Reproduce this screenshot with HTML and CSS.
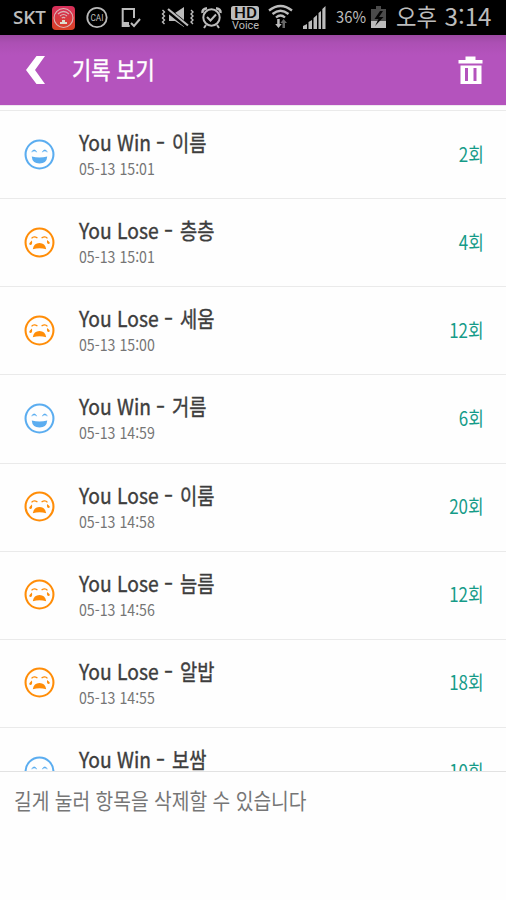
FILE: index.html
```
<!DOCTYPE html>
<html lang="ko">
<head>
<meta charset="utf-8">
<title>기록 보기</title>
<link rel="stylesheet" href="styles.css">
</head>
<body>
<svg class="defs" aria-hidden="true">
  <symbol id="win" viewBox="0 0 30 30">
    <circle cx="15" cy="15" r="13.500" fill="none" stroke="currentColor" stroke-width="2"/>
    <path d="M7.300 12.700Q9.800 8.300 12.500 12.700Q9.800 10.600 7.300 12.700ZM17.500 12.700Q20.200 8.300 22.700 12.700Q20.200 10.600 17.500 12.700Z" fill="currentColor" stroke="currentColor" stroke-width=".4"/>
    <path d="M7.500 17Q15 18.800 22.500 17Q22 23.800 15 23.800T7.500 17Z" fill="currentColor"/>
  </symbol>
  <symbol id="lose" viewBox="0 0 30 30">
    <circle cx="15" cy="15" r="13.500" fill="none" stroke="currentColor" stroke-width="2"/>
    <path d="M7.300 11Q9.500 8.200 13 10.700M17 10.700Q20.500 8.200 22.700 11" fill="none" stroke="currentColor" stroke-width="1.300"/>
    <path d="M8.500 21.500Q9.500 15.500 15 15.500T21.500 21.500Q15 19.600 8.500 21.500Z" fill="currentColor"/>
    <path d="M7.700 13Q8.500 17.200 6.200 17.400Q3.300 16.500 7.700 13ZM22.300 12.500Q21.800 16.200 23.800 16.500Q26.800 15.500 22.300 12.500Z" fill="currentColor"/>
  </symbol>
</svg>
<div class="status">
  <svg class="status-icons" viewBox="0 0 506 35">
    <defs><linearGradient id="hot" x2="0" y2="1"><stop stop-color="#d62f5c"/><stop offset="1" stop-color="#d94224"/></linearGradient></defs>
    <rect x="52" y="6" width="23" height="24" rx="4" fill="url(#hot)"/>
    <g fill="none" stroke="#d9b5b5">
      <circle cx="63.5" cy="18" r="9.5" stroke-width="1.1"/>
      <path d="M58 14Q63.5 9 69 14M60 16Q63.5 13 67 16M61.8 18Q63.5 16.6 65.2 18" stroke-width="1.2"/>
    </g>
    <path d="M60 24v-2h2v-2h3v2h2v2Z" fill="#ddc"/>
    <circle cx="97" cy="17.5" r="9.7" fill="none" stroke="#b9b9b9" stroke-width="1.8"/>
    <g fill="none" stroke="#bcbcbc" stroke-width="2">
      <path d="M134 18V9h-11.3v17h7"/><path d="M131 23l3 3 6-7" />
    </g>
    <path d="M122 22h7v5h-7Z" fill="#bcbcbc"/>
    <path d="M162.500 10l2 2-2 2 2 2-2 2 2 2-2 2 2 2M191 10l2 2-2 2 2 2-2 2 2 2-2 2 2 2" fill="none" stroke="#bcbcbc" stroke-width="1.400"/>
    <path d="M169 13h6l9-6v20l-9-6h-6Z" fill="#bcbcbc"/>
    <path d="M167 9.500l21 17" stroke="#000" stroke-width="5"/>
    <path d="M168 9l20 16.500" stroke="#bcbcbc" stroke-width="2.200"/>
    <g fill="none" stroke="#bcbcbc" stroke-width="2">
      <circle cx="211.500" cy="17.500" r="8.200"/><path d="M207 17l3.500 3.500 5.500-6M206 25l-2 3M217 25l2 3"/>
      <path d="M202.500 13Q202 9 207 8.300M220.500 13Q221 9 216 8.300" stroke-width="2.500"/>
    </g>
    <rect x="231" y="6" width="28" height="14" rx="2.500" fill="#bcbcbc"/>
    <g fill="none" stroke="#bcbcbc" stroke-width="2.300">
      <path d="M269 10.500Q280.500 1.500 292 10.500M272.500 14Q280.500 7.500 288.500 14M276 17.500Q280.500 13.500 285 17.500"/>
    </g>
    <path d="M277.200 19h2.500v5h2l-3.200 4-3.300-4h2Z" fill="#bcbcbc"/>
    <path d="M283.500 19l3.500 4h-2v5h-2.500v-5h-2Z" fill="#686868"/>
    <path d="M303 29v-3l4-2v5ZM308.500 29v-7l3.500-2v9ZM313.500 29V18l3.500-3v14ZM318.500 29V13l2.500-2v18ZM322.300 29V9l3.200-3v23Z" fill="#bcbcbc"/>
    <path d="M371 9h5V6h5v3h5v19h-15Z" fill="#4b4b4b"/>
    <path d="M371 21h15v7h-15Z" fill="#bcbcbc"/>
    <path d="M380 11l-5.500 8h4l-3.500 7 8.500-9h-4.500l4-6Z" fill="#050505"/>
    <g class="status-text">
      <text x="13" y="24" textLength="33" lengthAdjust="spacingAndGlyphs" class="carrier">SKT</text>
      <text x="90.500" y="20.700" textLength="13" lengthAdjust="spacingAndGlyphs" class="cai">CAI</text>
      <text x="234" y="17.700" textLength="23" lengthAdjust="spacingAndGlyphs" class="hd">HD</text>
      <text x="232" y="28.800" textLength="27" lengthAdjust="spacingAndGlyphs" class="voice">Voice</text>
      <text x="336" y="23" textLength="30" lengthAdjust="spacingAndGlyphs" class="battery">36%</text>
      <text x="396" y="26" textLength="41" lengthAdjust="spacingAndGlyphs" class="clock">오후</text>
      <text x="444.500" y="26" textLength="47" lengthAdjust="spacingAndGlyphs" class="clock">3:14</text>
    </g>
  </svg>
</div>
<header class="bar">
  <svg class="back" viewBox="0 0 20 28"><path d="M10.500 0H19L9 14l10 14h-8.500L0 14Z" fill="#fff"/></svg>
  <h1><span>기록 보기</span></h1>
  <svg class="trash" viewBox="0 0 24 28"><path fill="#fff" fill-rule="evenodd" d="M0 4h7V.500h10V4h7v3.500H0ZM2 9.500h21V28H2ZM6.500 12v13H9.500V12ZM15 12v13h3V12Z"/></svg>
</header>
<main class="list">
  <div class="row"><svg class="face win"><use href="#win"/></svg><div class="info"><p class="title"><span class="en w">You Win</span><span class="dash">-</span><span class="ko">이름</span></p><p class="date">05-13 15:01</p></div><p class="count">2회</p></div>
  <div class="row"><svg class="face lose"><use href="#lose"/></svg><div class="info"><p class="title"><span class="en l">You Lose</span><span class="dash">-</span><span class="ko">층층</span></p><p class="date">05-13 15:01</p></div><p class="count">4회</p></div>
  <div class="row"><svg class="face lose"><use href="#lose"/></svg><div class="info"><p class="title"><span class="en l">You Lose</span><span class="dash">-</span><span class="ko">세움</span></p><p class="date">05-13 15:00</p></div><p class="count">12회</p></div>
  <div class="row"><svg class="face win"><use href="#win"/></svg><div class="info"><p class="title"><span class="en w">You Win</span><span class="dash">-</span><span class="ko">거름</span></p><p class="date">05-13 14:59</p></div><p class="count">6회</p></div>
  <div class="row"><svg class="face lose"><use href="#lose"/></svg><div class="info"><p class="title"><span class="en l">You Lose</span><span class="dash">-</span><span class="ko">이룸</span></p><p class="date">05-13 14:58</p></div><p class="count">20회</p></div>
  <div class="row"><svg class="face lose"><use href="#lose"/></svg><div class="info"><p class="title"><span class="en l">You Lose</span><span class="dash">-</span><span class="ko">늠름</span></p><p class="date">05-13 14:56</p></div><p class="count">12회</p></div>
  <div class="row"><svg class="face lose"><use href="#lose"/></svg><div class="info"><p class="title"><span class="en l">You Lose</span><span class="dash">-</span><span class="ko">알밥</span></p><p class="date">05-13 14:55</p></div><p class="count">18회</p></div>
  <div class="row"><svg class="face win"><use href="#win"/></svg><div class="info"><p class="title"><span class="en w">You Win</span><span class="dash">-</span><span class="ko">보쌈</span></p></div><p class="count">10회</p></div>
</main>
<footer class="hint"><p>길게 눌러 항목을 삭제할 수 있습니다</p></footer>
</body>
</html>
```
FILE: styles.css
```
* { box-sizing: border-box; }
body {
  margin: 0;
  width: 506px;
  height: 900px;
  overflow: hidden;
  background: #fefefe;
  font-family: "Noto Sans CJK KR", sans-serif;
  display: flex;
  flex-direction: column;
}
p, h1 { margin: 0; font-weight: 400; white-space: nowrap; }
svg { display: block; flex: none; }
.defs { width: 0; height: 0; }
.status { height: 35px; background: #000; flex: none; }
.status-icons { width: 506px; height: 35px; }
.status-text { fill: #bcbcbc; }
.carrier { font: 600 18px "Open Sans", sans-serif; }
.cai { font: 9px "Roboto", sans-serif; }
.hd { font: 500 14px "Roboto", sans-serif; fill: #080808; }
.voice { font: 400 11px "Roboto", sans-serif; }
.battery { font: 16.5px "Noto Sans CJK KR", sans-serif; }
.clock { font: 24px "Noto Sans CJK KR", sans-serif; }
.bar {
  height: 70px;
  flex: none;
  display: flex;
  align-items: center;
  padding: 0 23px 0 26px;
  background: linear-gradient(#9c49a3, #ac50b4 8px, #b453bd 20px);
}
.back { width: 20px; height: 28px; }
.bar h1 { flex: 1; padding-left: 26px; font-size: 24px; line-height: 68px; height: 70px; color: #fff; }
.bar h1 span {
  display: inline-block;
  transform: scaleX(.87);
  transform-origin: left;
  -webkit-text-stroke: .5px #fff;
}
.trash { width: 25px; height: 28px; }
.list {
  height: 666px;
  flex: none;
  overflow: hidden;
  padding-top: 5px;
  box-shadow: inset 0 1px #eee7ef;
}
.row {
  height: 88.15px;
  display: flex;
  align-items: center;
  padding: 0 22px 1px 24px;
  border-top: 1px solid #eaeaea;
}
.face { width: 31px; height: 31px; }
.win { color: #5badf0; }
.lose { color: #ff8d08; }
.info { flex: 1; padding-left: 24px; height: 66px; }
.title {
  height: 36px;
  padding-top: 3px;
  line-height: 36px;
  font-size: 21.5px;
  color: #3d3d3d;
  display: flex;
  -webkit-text-stroke: .4px #3d3d3d;
}
.en { transform: scaleX(.895); transform-origin: left; }
.en.w { width: 77px; }
.en.l { width: 85px; }
.dash { width: 16px; transform: scaleX(1.2); transform-origin: left; }
.ko { transform: scaleX(.87); transform-origin: left; }
.date {
  line-height: 22px;
  font-size: 15.5px;
  color: #757575;
  transform: scaleX(.915);
  transform-origin: left;
}
.count { font-size: 19.5px; line-height: 28px; padding-bottom: 1px; color: #159b88; transform: scaleX(.87); transform-origin: right; }
.hint { flex: 1; border-top: 1px solid #e2e2e2; padding: 10px 14px; }
.hint p {
  font-size: 21.5px;
  line-height: 36px;
  width: 478px;
  color: #767676;
  transform: scaleX(.895);
  transform-origin: left;
}
```
